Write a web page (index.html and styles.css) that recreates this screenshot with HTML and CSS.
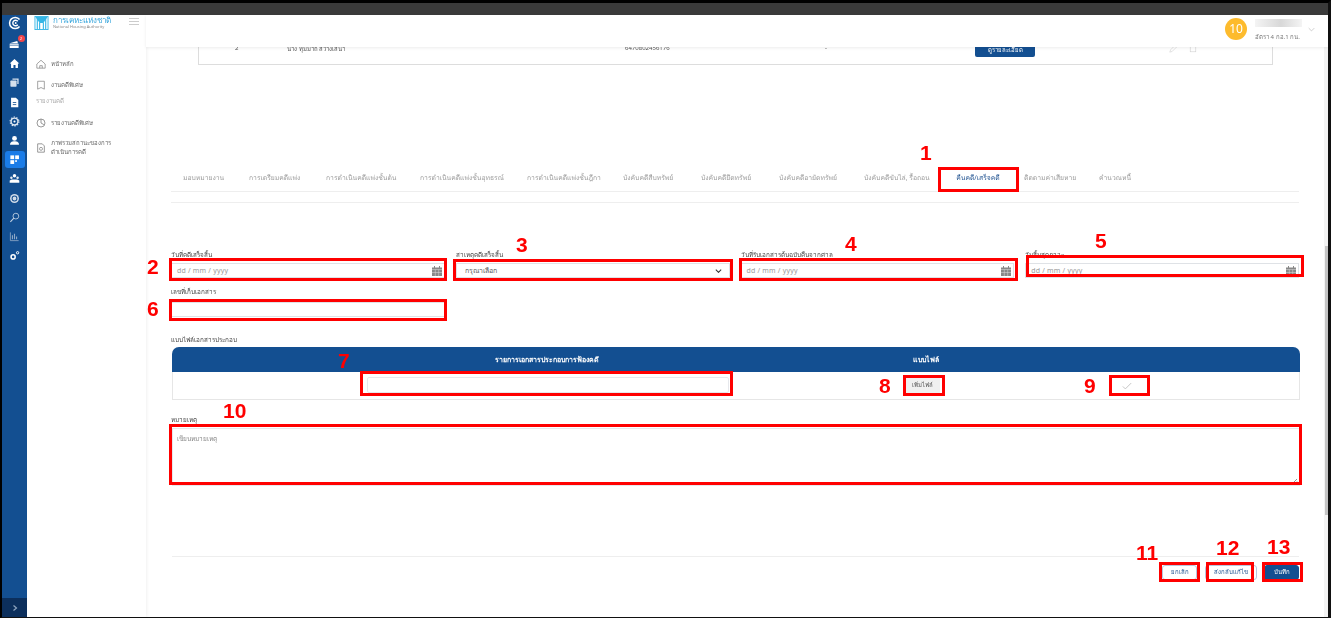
FILE: index.html
```html
<!DOCTYPE html>
<html lang="th">
<head>
  <meta charset="UTF-8">
  <meta name="viewport" content="width=device-width, initial-scale=1.0">
  <title>คืนคดี/เสร็จคดี</title>
  <link rel="stylesheet" href="styles.css">
</head>
<body>
  <div class="frame">
    <div class="chrome"></div>
    <div class="app">
      <nav class="rail">
        <svg class="rail-logo" viewBox="0 0 20 20"><path d="M16.5 5A8 8 0 1 0 16.5 15" fill="none" stroke="#fff" stroke-width="2.2"/><path d="M14 7.5A4 4 0 1 0 14 12.5" fill="none" stroke="#fff" stroke-width="2"/><circle cx="11" cy="10" r="1.3" fill="#fff"/></svg>
        <span class="rail-item rail-mail">
          <svg viewBox="0 0 16 16"><path d="M1 6l11-3 1 3zM1 7h13v6H1z" fill="#fff"/><path d="M1 9h13" stroke="#134f91"/></svg>
          <i class="dot">2</i>
        </span>
        <span class="rail-item"><svg viewBox="0 0 16 16"><path d="M8 1.5L1 8h2v6.5h3.5V10h3v4.5H13V8h2z" fill="#fff"/></svg></span>
        <span class="rail-item"><svg viewBox="0 0 16 16"><path d="M5 2h9v8h-2V4H5z" fill="#d5e0ec"/><rect x="2" y="5" width="9" height="9" rx="1" fill="#d5e0ec"/></svg></span>
        <span class="rail-item"><svg viewBox="0 0 16 16"><path d="M3 1h7l3.5 3.5V15H3z" fill="#fff"/><path d="M5.5 8h5M5.5 11h5" stroke="#134f91" stroke-width="1.2"/></svg></span>
        <span class="rail-item"><svg viewBox="0 0 16 16"><circle cx="8" cy="8" r="5" fill="none" stroke="#e2eaf3" stroke-width="2"/><circle cx="8" cy="8" r="6.5" fill="none" stroke="#e2eaf3" stroke-width="1.5" stroke-dasharray="2 2.08"/><circle cx="8" cy="8" r="1.5" fill="#fff"/></svg></span>
        <span class="rail-item"><svg viewBox="0 0 16 16"><circle cx="8" cy="5" r="3.5" fill="#fff"/><path d="M1.5 14c0-4 3-5 6.5-5s6.5 1 6.5 5z" fill="#fff"/></svg></span>
        <span class="rail-item rail-active"><svg viewBox="0 0 16 16"><rect x="2" y="2" width="5.5" height="5.5" fill="#fff"/><rect x="9" y="2" width="5.5" height="5.5" fill="#fff"/><rect x="2" y="9" width="5.5" height="5.5" fill="#fff"/><rect x="9" y="9" width="2.5" height="2.5" fill="#fff"/></svg></span>
        <span class="rail-item"><svg viewBox="0 0 16 16"><circle cx="8" cy="4" r="2.5" fill="#fff"/><circle cx="3.5" cy="7" r="1.8" fill="#e2eaf3"/><circle cx="12.5" cy="7" r="1.8" fill="#e2eaf3"/><path d="M1 14v-3l3-1.5h8l3 1.5v3z" fill="#fff"/></svg></span>
        <span class="rail-item"><svg viewBox="0 0 16 16"><circle cx="8" cy="8" r="6.5" fill="#cfdbe8"/><circle cx="8" cy="8" r="3.5" fill="none" stroke="#134f91" stroke-width="1.5"/></svg></span>
        <span class="rail-item"><svg viewBox="0 0 16 16"><circle cx="10" cy="6" r="4.2" fill="none" stroke="#c6d4e4" stroke-width="1.2"/><path d="M7 9l-5 5.5" stroke="#c6d4e4" stroke-width="1.5"/></svg></span>
        <span class="rail-item"><svg viewBox="0 0 16 16"><path d="M2 2v12h12" fill="none" stroke="#8fa9c6" stroke-width="1.2"/><path d="M5 12V6M8 12V4M11 12V8" stroke="#8fa9c6" stroke-width="1.6"/></svg></span>
        <span class="rail-item"><svg viewBox="0 0 16 16"><circle cx="6" cy="10" r="3" fill="none" stroke="#fff" stroke-width="2.2"/><circle cx="12.5" cy="4" r="1.7" fill="none" stroke="#fff" stroke-width="1.4"/></svg></span>
        <span class="rail-expand"><svg viewBox="0 0 8 8"><path d="M2.5 1.5L5.5 4l-3 2.5" fill="none" stroke="#8fa5bf" stroke-width="1.2"/></svg></span>
      </nav>

      <aside class="sidebar">
        <div class="brand">
          <svg class="brand-logo" viewBox="0 0 15 15"><rect x=".5" y=".5" width="14" height="14" fill="#fff" stroke="#35b6e6"/><path d="M1 1h13L9.5 7.5h-4z" fill="#35b6e6"/><path d="M3 2v12M12 2v12M5.5 7v7M9.5 7v7" stroke="#35b6e6" stroke-width="1.2"/></svg>
          <div class="brand-name">
            <span class="brand-th">การเคหะแห่งชาติ</span>
            <span class="brand-en">National Housing Authority</span>
          </div>
          <div class="burger"><i></i><i></i><i></i></div>
        </div>
        <ul class="menu">
          <li class="menu-item"><svg viewBox="0 0 12 12"><path d="M1 6l5-4.5L11 6v5H1zM4.5 11V8h3v3" fill="none" stroke="#777" stroke-width=".8"/></svg>หน้าหลัก</li>
          <li class="menu-item"><svg viewBox="0 0 12 12"><path d="M2 1.5h8V11L6 9l-4 2z" fill="none" stroke="#777" stroke-width=".8"/></svg>งานคดีพิเศษ</li>
          <li class="menu-head">รายงานคดี</li>
          <li class="menu-item"><svg viewBox="0 0 12 12"><circle cx="6" cy="6" r="4.8" fill="none" stroke="#777" stroke-width=".9"/><path d="M6 1.2V6l3.5 2" fill="none" stroke="#777" stroke-width=".9"/></svg>รายงานคดีพิเศษ</li>
          <li class="menu-item menu-wrap"><svg viewBox="0 0 12 12"><path d="M2 1h5.5L10 3.5V11H2z" fill="none" stroke="#777" stroke-width=".9"/><circle cx="6" cy="7" r="1.8" fill="none" stroke="#777" stroke-width=".8"/></svg><span>ภาพรวมสถานะของการ<br>ดำเนินการคดี</span></li>
        </ul>
      </aside>

      <div class="main">
        <header class="topbar">
          <div class="avatar">10</div>
          <div class="user">
            <span class="user-name"></span>
            <span class="user-role">อัตรา 4 กอ.1 กน.</span>
          </div>
          <svg class="user-caret" viewBox="0 0 10 6"><path d="M1 1l4 4 4-4" fill="none" stroke="#aaa" stroke-width=".8"/></svg>
        </header>

        <div class="content">
          <div class="case-card">
            <span class="case-no">2</span>
            <span class="case-name">นาง ทุมมาถ สว่างเสนา</span>
            <span class="case-id">6470802456176</span>
            <span class="case-dash">-</span>
            <span class="case-btn">ดูรายละเอียด</span>
            <span class="case-tools">
              <svg viewBox="0 0 10 10"><path d="M1 9l1-3 5-5 2 2-5 5z" fill="none" stroke="#ccc" stroke-width=".7"/></svg>
              <svg viewBox="0 0 10 10"><rect x="1.5" y="1.5" width="7" height="7" fill="none" stroke="#ccc" stroke-width=".7"/></svg>
            </span>
          </div>

          <div class="tabs">
            <span class="tab">มอบหมายงาน</span>
            <span class="tab">การเตรียมคดีแพ่ง</span>
            <span class="tab">การดำเนินคดีแพ่งชั้นต้น</span>
            <span class="tab">การดำเนินคดีแพ่งชั้นอุทธรณ์</span>
            <span class="tab">การดำเนินคดีแพ่งชั้นฎีกา</span>
            <span class="tab">บังคับคดีสืบทรัพย์</span>
            <span class="tab">บังคับคดียึดทรัพย์</span>
            <span class="tab">บังคับคดีอายัดทรัพย์</span>
            <span class="tab">บังคับคดีขับไล่, รื้อถอน</span>
            <span class="tab tab-active">คืนคดี/เสร็จคดี</span>
            <span class="tab">ติดตามค่าเสียหาย</span>
            <span class="tab">คำนวณหนี้</span>
          </div>
          <div class="tabs-rule"></div>

          <div class="form-row">
            <div class="field">
              <label class="field-label">วันที่คดีเสร็จสิ้น</label>
              <div class="input input-date">dd / mm / yyyy
                <svg class="cal" viewBox="0 0 10 10"><path d="M0 1.5h10V10H0z" fill="#888"/><path d="M0 3.5h10M3.3 3.5V10M6.7 3.5V10M0 6.5h10" stroke="#ddd" stroke-width=".5"/><path d="M2.5 0v2M7.5 0v2" stroke="#888"/></svg>
              </div>
            </div>
            <div class="field">
              <label class="field-label">สาเหตุคดีเสร็จสิ้น</label>
              <div class="input input-select">กรุณาเลือก
                <svg class="chev" viewBox="0 0 10 6"><path d="M1 1l4 4 4-4" fill="none" stroke="#333" stroke-width="1.6"/></svg>
              </div>
            </div>
            <div class="field">
              <label class="field-label">วันที่รับเอกสารต้นฉบับคืนจากศาล</label>
              <div class="input input-date">dd / mm / yyyy
                <svg class="cal" viewBox="0 0 10 10"><path d="M0 1.5h10V10H0z" fill="#888"/><path d="M0 3.5h10M3.3 3.5V10M6.7 3.5V10M0 6.5h10" stroke="#ddd" stroke-width=".5"/><path d="M2.5 0v2M7.5 0v2" stroke="#888"/></svg>
              </div>
            </div>
            <div class="field">
              <label class="field-label">วันสิ้นสุดภาวะ</label>
              <div class="input input-date">dd / mm / yyyy
                <svg class="cal" viewBox="0 0 10 10"><path d="M0 1.5h10V10H0z" fill="#888"/><path d="M0 3.5h10M3.3 3.5V10M6.7 3.5V10M0 6.5h10" stroke="#ddd" stroke-width=".5"/><path d="M2.5 0v2M7.5 0v2" stroke="#888"/></svg>
              </div>
            </div>
          </div>

          <div class="field field-doc">
            <label class="field-label">เลขที่เก็บเอกสาร</label>
            <div class="input"></div>
          </div>

          <div class="section-title">แบบไฟล์เอกสารประกอบ</div>
          <div class="doc-table">
            <div class="doc-head">
              <span class="doc-col-name">รายการเอกสารประกอบการฟ้องคดี</span>
              <span class="doc-col-file">แบบไฟล์</span>
            </div>
            <div class="doc-row">
              <div class="doc-input"></div>
              <span class="doc-add">เพิ่มไฟล์</span>
              <svg class="doc-check" viewBox="0 0 12 9"><path d="M1 5l3 3 7-7" fill="none" stroke="#bbb" stroke-width="1"/></svg>
            </div>
          </div>

          <label class="field-label note-label">หมายเหตุ</label>
          <div class="note">เขียนหมายเหตุ
            <svg class="grip" viewBox="0 0 6 6"><path d="M1 5l4-4M3.5 5L5 3.5" stroke="#666" stroke-width=".7"/></svg>
          </div>

          <div class="actions">
            <span class="btn btn-cancel">ยกเลิก</span>
            <span class="btn btn-return">ส่งกลับแก้ไข</span>
            <span class="btn btn-primary">บันทึก</span>
          </div>
        </div>
        <div class="scrollbar"><i></i></div>
      </div>
    </div>

    <!-- red call-outs sit over the page -->
    <i class="mark mark-1"></i><i class="mark mark-2"></i><i class="mark mark-3"></i><i class="mark mark-4"></i>
    <i class="mark mark-5"></i><i class="mark mark-6"></i><i class="mark mark-7"></i><i class="mark mark-8"></i>
    <i class="mark mark-9"></i><i class="mark mark-10"></i><i class="mark mark-11"></i><i class="mark mark-12"></i><i class="mark mark-13"></i>
    <b class="num num-1">1</b><b class="num num-2">2</b><b class="num num-3">3</b><b class="num num-4">4</b>
    <b class="num num-5">5</b><b class="num num-6">6</b><b class="num num-7">7</b><b class="num num-8">8</b>
    <b class="num num-9">9</b><b class="num num-10">10</b><b class="num num-11">11</b><b class="num num-12">12</b><b class="num num-13">13</b>
  </div>
</body>
</html>
```

FILE: styles.css
```css
* {
  box-sizing: border-box;
}
html, body {
  margin: 0;
  height: 100%;
  overflow: hidden;
}
body {
  font-family: 'Noto Sans', 'DejaVu Sans', sans-serif;
  background: #fff;
  color: #444;
}
.frame {
  position: relative;
  width: 1331px;
  height: 618px;
  display: flex;
  flex-direction: column;
  border-top: 3px solid #000;
  border-bottom: 1px solid #111;
  border-left: 2px solid #000;
  border-right: 3px solid #111;
}
.chrome {
  height: 12px;
  background: #3a3a3a;
  flex: none;
}
.app {
  flex: 1;
  display: flex;
  min-height: 0;
}

/* icon rail */
.rail {
  position: relative;
  width: 25px;
  flex: none;
  background: #134f91;
  display: flex;
  flex-direction: column;
  align-items: center;
  padding-top: 1px;
  filter: blur(0.25px);
}
.rail-logo {
  width: 14px;
  height: 14px;
  margin-bottom: 5px;
}
.rail-item {
  position: relative;
  width: 20px;
  height: 19.2px;
  display: flex;
  align-items: center;
  justify-content: center;
  flex: none;
}
.rail-item svg {
  width: 11px;
  height: 11px;
}
.rail-active {
  height: 17.2px;
  margin: 1px 0;
  background: #1a7ce8;
  border-radius: 3px;
}
.dot {
  position: absolute;
  top: 0;
  right: 0;
  width: 7px;
  height: 7px;
  border-radius: 50%;
  background: #f0454a;
  color: #fff;
  font-size: 4px;
  font-style: normal;
  line-height: 7px;
  text-align: center;
}
.rail-expand {
  position: absolute;
  left: 0;
  right: 0;
  bottom: 0;
  height: 19px;
  background: #0c2f5c;
  display: flex;
  align-items: center;
  justify-content: center;
}
.rail-expand svg {
  width: 8px;
  height: 8px;
}

/* sidebar */
.sidebar {
  width: 119px;
  flex: none;
  background: #fff;
  box-shadow: 1px 0 3px rgba(0,0,0,0.06);
  z-index: 2;
  filter: blur(0.35px);
}
.brand {
  display: flex;
  align-items: flex-start;
  padding: 1px 7px 0 7px;
  height: 38px;
}
.brand-logo {
  width: 15px;
  height: 14px;
  flex: none;
  margin-right: 4px;
}
.brand-name {
  flex: 1;
  display: flex;
  flex-direction: column;
  line-height: 7px;
  white-space: nowrap;
}
.brand-th {
  font-size: 8px;
  color: #35a5dc;
}
.brand-en {
  font-size: 4px;
  color: #888;
}
.burger {
  width: 10px;
  display: flex;
  flex-direction: column;
  gap: 2px;
  margin-top: 2px;
}
.burger i {
  height: 1px;
  background: #ccc;
}
.menu {
  list-style: none;
  margin: 0;
  padding: 0 0 0 9px;
  font-size: 6px;
  color: #666;
}
.menu-item {
  display: flex;
  align-items: center;
  gap: 5px;
  height: 21px;
  white-space: nowrap;
}
.menu-item svg {
  width: 10px;
  height: 10px;
  flex: none;
}
.menu-head {
  height: 17px;
  line-height: 13px;
  color: #aaa;
}
.menu-wrap {
  height: 30px;
  line-height: 9px;
}

/* main column */
.main {
  position: relative;
  flex: 1;
  min-width: 0;
}
.topbar {
  position: relative;
  z-index: 3;
  height: 32px;
  background: #fff;
  box-shadow: 0 1px 3px rgba(0,0,0,0.08);
  display: flex;
  align-items: center;
  justify-content: flex-end;
  padding-right: 13px;
  filter: blur(0.35px);
}
.avatar {
  width: 22px;
  height: 22px;
  margin: -4px 8px 0 0;
  border-radius: 50%;
  background: #fdbb2d;
  color: #fff;
  font-size: 12px;
  line-height: 22px;
  text-align: center;
}
.user {
  width: 47px;
  display: flex;
  flex-direction: column;
  gap: 7px;
  margin-top: -2px;
}
.user-name {
  height: 8px;
  background: linear-gradient(90deg, #f4f4f4, #d8d8d8 55%, #f4f4f4);
}
.user-role {
  font-size: 6px;
  line-height: 7px;
  color: #777;
  white-space: nowrap;
}
.user-caret {
  width: 7px;
  height: 5px;
  margin: -4px 0 0 6px;
}
.content {
  height: 569px;
  overflow: hidden;
  padding: 0 29px 0 25px;
  filter: blur(0.35px);
}

/* leftover table row above the tabs */
.case-card {
  margin: -9px 26px 0 27px;
  height: 27px;
  border: 1px solid #ddd;
  border-top: 0;
  display: flex;
  align-items: flex-start;
  padding-top: 6px;
  font-size: 6px;
  color: #555;
  white-space: nowrap;
}
.case-no {
  margin-left: 36px;
  width: 52px;
}
.case-name {
  width: 338px;
}
.case-id {
  width: 200px;
}
.case-dash {
  width: 150px;
}
.case-btn {
  width: 60px;
  height: 14px;
  margin-top: -1px;
  background: #134f91;
  color: #fff;
  border-radius: 2px;
  text-align: center;
  line-height: 14px;
}
.case-tools {
  display: flex;
  gap: 12px;
  margin: 1px 0 0 134px;
}
.case-tools svg {
  width: 8px;
  height: 8px;
}

/* tabs */
.tabs {
  display: flex;
  margin-top: 104px;
  padding-left: 12px;
  height: 23px;
  border-bottom: 1px solid #eee;
  font-size: 6.75px;
  text-rendering: geometricPrecision;
  color: #999;
  white-space: nowrap;
}
.tab {
  line-height: 17px;
  flex: none;
}
.tab:nth-child(1) { width: 66px; }
.tab:nth-child(2) { width: 77px; }
.tab:nth-child(3) { width: 94px; }
.tab:nth-child(4) { width: 107px; }
.tab:nth-child(5) { width: 96px; }
.tab:nth-child(6) { width: 78px; }
.tab:nth-child(7) { width: 78px; }
.tab:nth-child(8) { width: 85px; }
.tab:nth-child(9) { width: 80px; }
.tab:nth-child(11) { width: 75px; margin-left: 12px; }
.tab-active {
  position: relative;
  width: 68px;
  text-align: center;
  color: #1c4f8e;
}
.tab-active::after {
  content: "";
  position: absolute;
  left: 0;
  right: 0;
  bottom: -1px;
  height: 2px;
  background: #3e74b5;
}
.tabs-rule {
  height: 1px;
  margin-top: 10px;
  background: #eee;
}

/* form */
.form-row {
  display: grid;
  grid-template-columns: repeat(4, 1fr);
  gap: 11px;
  margin-top: 47px;
}
.field-doc {
  width: 274px;
  margin-top: 9px;
}
.field-label {
  display: block;
  font-size: 6.3px;
  line-height: 9px;
  color: #444;
  white-space: nowrap;
}
.input {
  position: relative;
  height: 15px;
  margin-top: 4px;
  background: #fff;
  border: 1px solid #dfe2e6;
  font-size: 7px;
  line-height: 13px;
  padding-left: 5px;
  color: #555;
}
.input-date {
  color: #999;
  letter-spacing: 0.2px;
}
.input-select {
  padding-left: 8px;
}
.cal {
  position: absolute;
  right: 2px;
  top: 2px;
  width: 10px;
  height: 10px;
}
.chev {
  position: absolute;
  right: 7px;
  top: 5px;
  width: 7px;
  height: 4px;
}
.field-doc .input {
  margin-top: 6px;
}
.section-title {
  margin-top: 18px;
  font-size: 6.3px;
  line-height: 9px;
  color: #444;
}
.doc-table {
  margin: 3px 0 0 1px;
  width: 1128px;
  border: 1px solid #e6e6e6;
  border-top: 0;
  border-radius: 7px 7px 0 0;
}
.doc-head {
  margin: 0 -1px;
  height: 25px;
  background: #134f91;
  border-radius: 7px 7px 0 0;
  color: #fff;
  font-size: 7px;
  font-weight: 600;
  line-height: 25px;
  display: flex;
  padding-left: 323px;
}
.doc-col-name {
  width: 418px;
}
.doc-row {
  height: 27px;
  display: flex;
  align-items: center;
  padding-left: 194px;
}
.doc-input {
  width: 362px;
  height: 16px;
  margin-bottom: 2px;
  border: 1px solid #e6e8ec;
  border-radius: 2px;
  flex: none;
}
.doc-add {
  margin-left: 176px;
  width: 35px;
  height: 15px;
  background: #f0f0f0;
  font-size: 6px;
  line-height: 15px;
  text-align: center;
  color: #555;
}
.doc-check {
  width: 10px;
  height: 8px;
  margin-left: 182px;
}
.note-label {
  margin-top: 15px;
}
.note {
  position: relative;
  margin: 4px 0 0 1px;
  width: 1128px;
  height: 58px;
  border: 1px solid #e6e8ec;
  padding: 5px 4px;
  font-size: 6.5px;
  color: #888;
}
.grip {
  position: absolute;
  right: 1px;
  bottom: 1px;
  width: 6px;
  height: 6px;
}
.actions {
  margin: 70px 0 0 1px;
  width: 1127px;
  border-top: 1px solid #eee;
  padding-top: 8px;
  display: flex;
  justify-content: flex-end;
  gap: 7px;
}
.btn {
  height: 15px;
  border: 1px solid #b6c8de;
  border-radius: 3px;
  font-size: 6px;
  line-height: 13px;
  text-align: center;
  color: #1c4f8e;
  white-space: nowrap;
}
.btn-cancel {
  width: 35px;
  margin-right: 1px;
}
.btn-return {
  width: 52px;
}
.btn-primary {
  width: 35px;
  background: #134f91;
  border-color: #134f91;
  color: #fff;
}
.scrollbar {
  position: absolute;
  z-index: 1;
  top: 32px;
  bottom: 0;
  right: 0;
  width: 4px;
  background: #f3f3f3;
}
.scrollbar i {
  position: absolute;
  top: 199px;
  left: 1px;
  right: 0;
  height: 269px;
  background: #c4c4c4;
}

/* call-outs, page coordinates minus the frame border */
.mark {
  position: absolute;
  z-index: 5;
  border: 3px solid #f00;
}
.mark-1 { left: 936px; top: 164px; width: 81px; height: 25px; }
.mark-2 { left: 167px; top: 255px; width: 278px; height: 23px; }
.mark-3 { left: 451px; top: 256px; width: 280px; height: 22px; }
.mark-4 { left: 737px; top: 255px; width: 279px; height: 23px; }
.mark-5 { left: 1024px; top: 252px; width: 278px; height: 22px; }
.mark-6 { left: 167px; top: 296px; width: 278px; height: 22px; }
.mark-7 { left: 358px; top: 368px; width: 373px; height: 25px; }
.mark-8 { left: 901px; top: 372px; width: 42px; height: 21px; }
.mark-9 { left: 1107px; top: 372px; width: 41px; height: 21px; }
.mark-10 { left: 167px; top: 421px; width: 1133px; height: 61px; }
.mark-11 { left: 1157px; top: 559px; width: 41px; height: 20px; }
.mark-12 { left: 1204px; top: 559px; width: 48px; height: 20px; }
.mark-13 { left: 1260px; top: 559px; width: 41px; height: 20px; }
.num {
  position: absolute;
  z-index: 6;
  font-family: 'Liberation Sans', sans-serif;
  font-size: 21px;
  line-height: 20px;
  color: #f00;
}
.num-1 { left: 918px; top: 140px; }
.num-2 { left: 145px; top: 254px; }
.num-3 { left: 514px; top: 232px; }
.num-4 { left: 843px; top: 231px; }
.num-5 { left: 1093px; top: 228px; }
.num-6 { left: 145px; top: 296px; }
.num-7 { left: 336px; top: 348px; }
.num-8 { left: 877px; top: 373px; }
.num-9 { left: 1082px; top: 373px; }
.num-10 { left: 221px; top: 398px; }
.num-11 { left: 1134px; top: 540px; }
.num-12 { left: 1214px; top: 535px; }
.num-13 { left: 1265px; top: 534px; }
```
